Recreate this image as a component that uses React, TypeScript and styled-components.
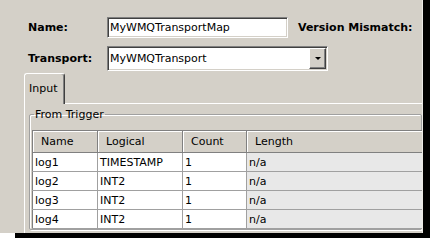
import styled, { createGlobalStyle } from "styled-components";

const GlobalStyle = createGlobalStyle`
  body {
    margin: 0;
    background: #fff;
    font-family: "DejaVu Sans", Tahoma, sans-serif;
    font-size: 11px;
    color: #000;
  }
`;

// black drop shadow to the right and below the dialog
const Shadow = styled.div`
  width: 430px;
  height: 238px;
  background: linear-gradient(#000, #000) 15px 0 / 415px 238px no-repeat;
`;

const Window = styled.div`
  width: 423px;
  height: 233px;
  box-sizing: border-box;
  background: #d4d0c8;
  border-right: 1px solid #eceae6;
  padding-top: 17px;
  overflow: hidden;
`;

const Form = styled.div`
  display: flex;
  flex-direction: column;
  gap: 8px;
  padding-left: 28px;
`;

const Row = styled.div<{ $h: number }>`
  display: flex;
  align-items: center;
  height: ${(p) => p.$h}px;
`;

const Label = styled.span`
  width: 79px;
  font-weight: bold;
  white-space: nowrap;
`;

const Mismatch = styled.span`
  margin-left: 10px;
  font-weight: bold;
  white-space: nowrap;
`;

const Sunken = styled.div<{ $w: number; $h: number }>`
  box-sizing: border-box;
  width: ${(p) => p.$w}px;
  height: ${(p) => p.$h}px;
  display: flex;
  align-items: center;
  background: #fff;
  border: 1px solid;
  border-color: #808080 #fff #fff #808080;
  box-shadow: inset 1px 1px 0 #404040, inset -1px -1px 0 #d4d0c8;
  padding-left: 2px;
  white-space: nowrap;
`;

const SelectText = styled.span`
  flex: 1;
`;

const DropButton = styled.div`
  box-sizing: border-box;
  width: 17px;
  height: 21px;
  margin-right: 1px;
  background: #d4d0c8;
  border: 1px solid;
  border-color: #fff #404040 #404040 #fff;
  box-shadow: inset -1px -1px 0 #808080;
  display: flex;
  align-items: center;
  justify-content: center;
  &::after {
    content: "";
    border-left: 3px solid transparent;
    border-right: 3px solid transparent;
    border-top: 3px solid #000;
  }
`;

const TabStrip = styled.div`
  display: flex;
  margin-top: 2px;
  padding-left: 24px;
`;

const Tab = styled.div`
  box-sizing: border-box;
  width: 41px;
  height: 31px;
  padding: 8px 0 0 4px;
  border: 1px solid;
  border-color: #fff #404040 transparent #fff;
  border-bottom: none;
  border-radius: 3px 3px 0 0;
  box-shadow: inset -1px 0 0 #808080;
  margin-bottom: -1px;
  background: #d4d0c8;
  position: relative;
  z-index: 1;
`;

const Panel = styled.div`
  margin-left: 24px;
  border-top: 1px solid #fff;
  border-left: 1px solid #fff;
  padding: 4px 0 0 4px;
  height: 200px;
`;

const Group = styled.fieldset`
  margin: 0;
  padding: 9px 0 0 2px;
  min-width: 0;
  border: 1px solid #a0a0a0;
  box-shadow: inset 1px 1px 0 #fff, 1px 1px 0 #fff;
  border-radius: 2px;
`;

const Caption = styled.legend`
  margin-left: 2px;
  padding: 0 1px;
  line-height: 13px;
`;

const Grid = styled.table`
  border-collapse: collapse;
  table-layout: fixed;
  width: 420px;
  background: #fff;
  border-top: 1px solid #808080;
  border-left: 1px solid #808080;
`;

const Head = styled.th<{ $w?: number }>`
  ${(p) => (p.$w ? `width: ${p.$w}px;` : "")}
  height: 22px;
  box-sizing: border-box;
  padding: 0 0 0 8px;
  text-align: left;
  font-weight: normal;
  background: #d4d0c8;
  border-right: 1px solid #808080;
  border-bottom: 1px solid #808080;
  box-shadow: inset 1px 1px 0 #fff;
  white-space: nowrap;
`;

const Cell = styled.td<{ $shade?: boolean }>`
  height: 18px;
  padding: 0 2px;
  background: ${(p) => (p.$shade ? "#e8e8e8" : "#fff")};
  border-right: 1px solid #a0a0a0;
  border-bottom: 1px solid #a0a0a0;
  white-space: nowrap;
`;

const rows = [
  { name: "log1", logical: "TIMESTAMP", count: "1", length: "n/a" },
  { name: "log2", logical: "INT2", count: "1", length: "n/a" },
  { name: "log3", logical: "INT2", count: "1", length: "n/a" },
  { name: "log4", logical: "INT2", count: "1", length: "n/a" },
];

const App = () => {
  return (
    <>
      <GlobalStyle />
      <Shadow>
        <Window>
          <Form>
            <Row $h={21}>
              <Label>Name:</Label>
              <Sunken $w={181} $h={21}>MyWMQTransportMap</Sunken>
              <Mismatch>Version Mismatch:</Mismatch>
            </Row>
            <Row $h={25}>
              <Label>Transport:</Label>
              <Sunken $w={221} $h={25}>
                <SelectText>MyWMQTransport</SelectText>
                <DropButton />
              </Sunken>
            </Row>
          </Form>
          <TabStrip>
            <Tab>Input</Tab>
          </TabStrip>
          <Panel>
            <Group>
              <Caption>From Trigger</Caption>
              <Grid>
                <thead>
                  <tr>
                    <Head $w={65}>Name</Head>
                    <Head $w={85}>Logical</Head>
                    <Head $w={64}>Count</Head>
                    <Head>Length</Head>
                  </tr>
                </thead>
                <tbody>
                  {rows.map((row) => (
                    <tr key={row.name}>
                      <Cell>{row.name}</Cell>
                      <Cell>{row.logical}</Cell>
                      <Cell>{row.count}</Cell>
                      <Cell $shade>{row.length}</Cell>
                    </tr>
                  ))}
                </tbody>
              </Grid>
            </Group>
          </Panel>
        </Window>
      </Shadow>
    </>
  );
};

export default App;
